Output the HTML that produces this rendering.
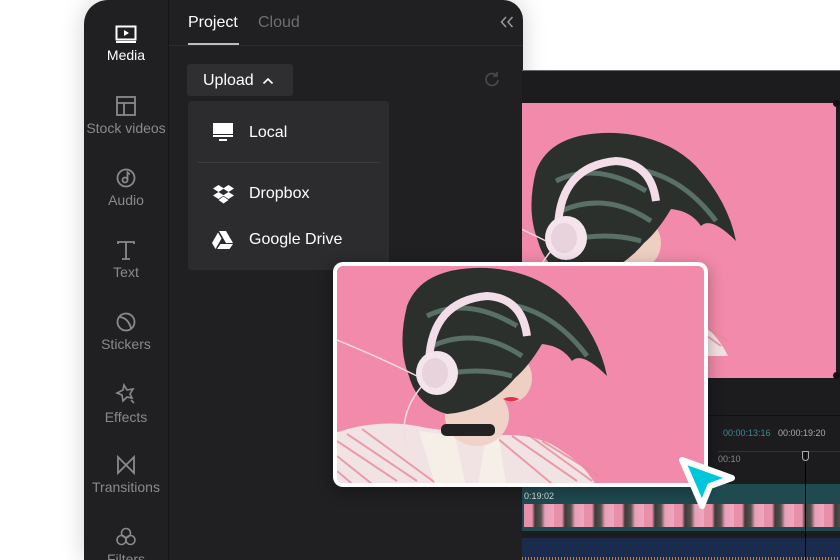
<!DOCTYPE html>
<html><head><meta charset="utf-8"><style>
*{margin:0;padding:0;box-sizing:border-box}
html,body{width:840px;height:560px;overflow:hidden}
body{background:#fff;position:relative;font-family:"Liberation Sans",sans-serif}
.abs{position:absolute}
#panel{left:84px;top:0;width:439px;height:560px;background:#202022;border-radius:24px 20px 0 0;box-shadow:0 0 24px rgba(0,0,0,.18);overflow:hidden}
#sep{left:84px;top:0;width:1px;height:560px;background:#151517}
.si{position:absolute;left:0;width:84px;text-align:center;color:#8a8a8c;font-size:14px}
.si svg{display:block;margin:0 auto 4px}
.tab{position:absolute;top:14px;font-size:16px}
.dd{color:#fff;font-size:16px;position:absolute;left:61px}
#right{left:522px;top:70px;width:318px;height:490px;background:#1c1c1e;border-top:1px solid #666;overflow:hidden}
</style></head><body>
<svg width="0" height="0" style="position:absolute">
<defs>
<symbol id="photo" viewBox="-100 -100 600 500">
<rect x="-100" y="-100" width="600" height="500" fill="#f28aab"/>
<path d="M-10 170 Q40 150 90 162 L150 170 Q200 165 225 185 Q250 200 262 225 L-10 225Z" fill="#f1e3e3"/>
<g stroke="#e88a9a" stroke-width="2" opacity=".8">
<path d="M0 175 L60 215 M10 168 L80 215 M25 163 L100 218 M175 170 L240 215 M190 168 L255 215 M205 175 L262 210 M160 172 L220 222 M0 190 L40 222 M0 205 L20 222"/>
</g>
<path d="M82 165 L100 225 L130 225 L118 170Z" fill="#f6efe8"/>
<path d="M160 160 L170 225 L140 225 L150 165Z" fill="#f6efe8"/>
<ellipse cx="140" cy="150" rx="32" ry="30" fill="#efd3c8"/>
<ellipse cx="175" cy="112" rx="20" ry="24" fill="#efcfc2"/>
<path d="M166 133 Q174 129 182 133 Q174 138 166 133Z" fill="#e0304e"/>
<rect x="104" y="158" width="54" height="12" rx="5" fill="#222"/>
<path d="M70 40 Q85 0 150 2 Q200 5 230 35 Q262 70 270 110 Q245 85 235 95 Q225 80 205 78 Q192 100 178 112 Q150 145 110 148 Q80 140 72 110 Q60 80 70 40Z" fill="#2c302d"/>
<path d="M90 50 Q130 30 180 60 M95 80 Q140 60 185 90 M100 110 Q140 100 175 110 M180 40 Q220 50 250 90" stroke="#7fa596" stroke-width="5" fill="none" opacity=".55"/>
<path d="M92 95 Q95 35 150 30 Q185 32 190 70" stroke="#f2dde8" stroke-width="8" fill="none"/>
<ellipse cx="100" cy="107" rx="21" ry="22" fill="#f4e4ec"/>
<ellipse cx="98" cy="107" rx="13" ry="15" fill="#e8d2dc"/>
<path d="M80 110 Q40 90 -10 70 M85 120 Q60 150 70 180" stroke="#f4dbe6" stroke-width="1.5" fill="none"/>
</symbol>
</defs></svg>

<div id="panel" class="abs">
  <div id="sep" class="abs"></div>
  <div class="si" style="top:25px;color:#fff">
    <svg width="22" height="18" viewBox="0 0 22 18"><rect x="1.5" y="1.5" width="19" height="13" fill="none" stroke="#fff" stroke-width="2"/><path d="M9 5 L14 8 L9 11Z" fill="#fff"/><rect x="1" y="16" width="20" height="2" fill="#fff"/></svg>Media</div>
  <div class="si" style="top:96px"><svg width="20" height="20" viewBox="0 0 20 20" fill="none" stroke="#8a8a8c" stroke-width="1.8"><rect x="1" y="1" width="18" height="18"/><path d="M1 7H19M8 7V19"/></svg>Stock videos</div>
  <div class="si" style="top:168px"><svg width="20" height="20" viewBox="0 0 20 20" fill="none" stroke="#8a8a8c" stroke-width="1.8"><circle cx="10" cy="10" r="8.5"/><circle cx="9" cy="12" r="2.5"/><path d="M11.5 12V4.5Q13 6 14 6"/></svg>Audio</div>
  <div class="si" style="top:240px"><svg width="20" height="20" viewBox="0 0 20 20" fill="none" stroke="#8a8a8c" stroke-width="1.8"><path d="M2 4V2H18V4M10 2V19M6 19H14"/></svg>Text</div>
  <div class="si" style="top:312px"><svg width="20" height="20" viewBox="0 0 20 20" fill="none" stroke="#8a8a8c" stroke-width="1.8"><circle cx="10" cy="10" r="8.5"/><path d="M4 5Q12 6 15 16"/></svg>Stickers</div>
  <div class="si" style="top:383px"><svg width="22" height="22" viewBox="0 0 22 22" fill="none" stroke="#8a8a8c" stroke-width="1.6"><path d="M9 2L12 7L18 6L15 11L17 15L12 14L8 18L7 12L2 10L8 7Z M16 17L19 20"/></svg>Effects</div>
  <div class="si" style="top:455px"><svg width="20" height="20" viewBox="0 0 20 20" fill="none" stroke="#8a8a8c" stroke-width="1.8"><path d="M2 2V18L18 2V18Z"/></svg>Transitions</div>
  <div class="si" style="top:527px"><svg width="22" height="20" viewBox="0 0 22 20" fill="none" stroke="#8a8a8c" stroke-width="1.6"><circle cx="11" cy="6" r="4.5"/><circle cx="6.5" cy="13" r="4.5"/><circle cx="15.5" cy="13" r="4.5"/></svg>Filters</div>

  <div class="tab" style="left:104px;color:#fff">Project</div>
  <div class="tab" style="left:174px;color:#6e6e70">Cloud</div>
  <div class="abs" style="left:104px;top:43px;width:51px;height:2px;background:#bdbdbd"></div>
  <div class="abs" style="left:85px;top:45px;width:354px;height:1px;background:#2d2d2f"></div>
  <svg class="abs" style="left:416px;top:16px" width="14" height="12" viewBox="0 0 14 12" fill="none" stroke="#9a9a9c" stroke-width="1.5"><path d="M6 1L1.5 6L6 11M12.5 1L8 6L12.5 11"/></svg>
  <div class="abs" style="left:103px;top:64px;width:106px;height:32px;background:#2f2f31;border-radius:3px;color:#fff;font-size:16px;padding:8px 0 0 16px">Upload <svg width="12" height="8" viewBox="0 0 12 8" style="margin-left:4px"><path d="M1.5 6.5L6 2L10.5 6.5" stroke="#fff" stroke-width="1.6" fill="none"/></svg></div>
  <svg class="abs" style="left:400px;top:71px" width="17" height="17" viewBox="0 0 17 17" fill="none" stroke="#4a4a4c" stroke-width="1.6"><path d="M14 9A6 6 0 1 1 12 4"/><path d="M13 1V5H9"/></svg>
  <div class="abs" style="left:104px;top:101px;width:201px;height:169px;background:#2c2c2e;border-radius:3px">
    <svg class="abs" style="left:25px;top:22px" width="20" height="18" viewBox="0 0 20 18"><rect x="0" y="0" width="20" height="11" fill="#fff"/><rect x="0" y="12" width="20" height="2" fill="#fff"/><rect x="6" y="16" width="8" height="2" fill="#fff"/></svg>
    <div class="dd" style="top:23px">Local</div>
    <div class="abs" style="left:10px;top:61px;width:182px;height:1px;background:#3c3c3e"></div>
    <svg class="abs" style="left:25px;top:84px" width="21" height="19" viewBox="0 0 21 19" fill="#fff"><path d="M5.5 0L0 3.5L5.5 7L11 3.5ZM15.5 0L10 3.5L15.5 7L21 3.5ZM0 10.5L5.5 14L11 10.5L5.5 7ZM15.5 7L10 10.5L15.5 14L21 10.5ZM5.5 15L10.5 18.5L15.5 15L10.5 11.5Z"/></svg>
    <div class="dd" style="top:84px">Dropbox</div>
    <svg class="abs" style="left:24px;top:130px" width="21" height="18" viewBox="0 0 21 18" fill="#fff"><path d="M7 0H14L21 12H14Z"/><path d="M6 1.5L9.5 7.5L3.5 18L0 12Z"/><path d="M5 18L8.5 13H21L17.5 18Z"/></svg>
    <div class="dd" style="top:130px">Google Drive</div>
  </div>
</div>

<div id="right" class="abs">
  <svg class="abs" style="left:0;top:32px" width="314" height="275" viewBox="56 -28 314 275" preserveAspectRatio="none"><use href="#photo" x="-100" y="-100" width="600" height="500"/></svg>
  <div class="abs" style="left:311px;top:29px;width:7px;height:7px;border-radius:50%;background:#111"></div>
  <div class="abs" style="left:311px;top:301px;width:7px;height:7px;border-radius:50%;background:#111"></div>
  <div class="abs" style="left:0;top:344px;width:318px;height:1px;background:#111"></div>
  <div class="abs" style="left:201px;top:357px;font-size:9px;color:#3c8a98">00:00:13:16</div>
  <div class="abs" style="left:256px;top:357px;font-size:9px;color:#aaa">00:00:19:20</div>
  <div class="abs" style="left:196px;top:380px;width:140px;height:1px;background:#333"></div>
  <div class="abs" style="left:196px;top:383px;font-size:9px;color:#888">00:10</div>
  <div class="abs" style="left:0;top:413px;width:318px;height:47px;background:#1e4a50"></div>
  <div class="abs" style="left:2px;top:420px;font-size:9px;color:#ddd">0:19:02</div>
  <div class="abs" style="left:2px;top:433px;width:318px;height:23px;background:repeating-linear-gradient(90deg,#e890aa 0,#e890aa 8px,#3a3a3a 11px,#5a5050 17px,#e8a0b8 21px,#f0a8c0 30px)"></div>
  <div class="abs" style="left:0;top:467px;width:318px;height:40px;background:#1a2b4e"></div>
  <div class="abs" style="left:0;top:486px;width:318px;height:6px;background:repeating-linear-gradient(90deg,#c77a3a 0,#c77a3a 1px,transparent 1px,transparent 3px)"></div>
  <div class="abs" style="left:283px;top:380px;width:1px;height:130px;background:#000"></div>
  <div class="abs" style="left:280px;top:380px;width:7px;height:10px;border:1px solid #aaa;border-radius:1px 1px 4px 4px"></div>
</div>

<div class="abs" style="left:333px;top:262px;width:375px;height:225px;background:#fff;border-radius:10px;padding:4px;box-shadow:0 4px 16px rgba(0,0,0,.3)">
  <svg width="367" height="217" viewBox="0 0 367 217" style="border-radius:6px;display:block"><use href="#photo" x="-100" y="-100" width="600" height="500"/></svg>
</div>

<svg class="abs" style="left:674px;top:452px" width="66" height="62" viewBox="0 0 66 62"><path d="M8 8L58 26L36 34L28 54Z" fill="#00c6dc" stroke="#fff" stroke-width="6" stroke-linejoin="round"/></svg>
</body></html>
